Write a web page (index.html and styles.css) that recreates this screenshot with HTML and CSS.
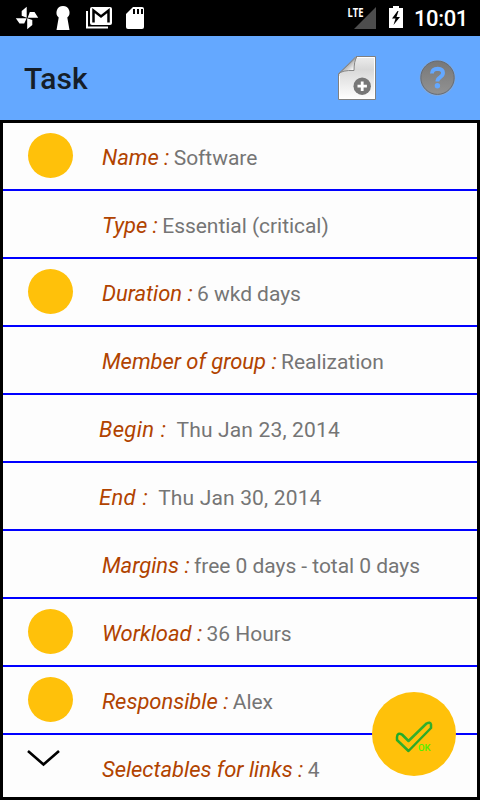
FILE: index.html
```html
<!DOCTYPE html>
<html lang="en">
<head>
<meta charset="utf-8">
<title>Task</title>
<link rel="stylesheet" href="styles.css">
</head>
<body>
<div class="screen">
  <div class="status">
    <svg class="status-icons" width="160" height="36" viewBox="0 0 160 36" fill="#fff">
      <path d="M21.700 11L26.700 6.800V17.700L21.700 15.800ZM27.700 17.700L29.800 12H34.500L38.200 17.700ZM27.200 18.200L32.300 20V25L27.200 29.200ZM26.700 18.200L24.200 23.500H19.500L15.800 18.200Z"/>
      <path d="M63 6a6.500 6.500 0 0 1 4.300 11.400L69.500 30h-13l2.200-12.600A6.500 6.500 0 0 1 63 6z"/>
      <path d="M87 11v16.500h21" fill="none" stroke="#fff" stroke-width="2"/>
      <rect x="90" y="7" width="22" height="18" rx="2"/>
      <path d="M93.500 22.500V10.500l7.500 6 7.500-6v12" fill="none" stroke="#000" stroke-width="2.500"/>
      <path d="M133 7h9a2 2 0 0 1 2 2v18a2 2 0 0 1-2 2h-14a2 2 0 0 1-2-2V14z"/>
      <path d="M134 9v5M138 9v5M142 9v5" stroke="#000" stroke-width="2"/>
    </svg>
    <div class="status-right">
      <span class="lte">LTE</span>
      <svg width="22" height="22" viewBox="0 0 22 22"><path d="M22 0v22H0z" fill="#4d4d4d"/></svg>
      <svg class="battery" width="14" height="22" viewBox="0 0 14 22"><path d="M4 0h6v2h4v20H0V2h4z" fill="#fff"/><path d="M8.500 5L3 12.500h3.500L4.500 19 11 11H7.500L9.500 5z" fill="#000"/></svg>
      <span class="clock">10:01</span>
    </div>
  </div>
  <header class="bar">
    <h1>Task</h1>
    <svg class="new" width="38" height="44" viewBox="0 0 38 44">
      <defs>
        <linearGradient id="page" x2="0" y2="1"><stop offset="0" stop-color="#ededed"/><stop offset=".3" stop-color="#d8d8d8"/><stop offset="1" stop-color="#fff"/></linearGradient>
        <linearGradient id="fold" x2="1" y2="1"><stop offset=".4" stop-color="#999"/><stop offset=".75" stop-color="#f6f6f6"/></linearGradient>
        <linearGradient id="disc" x2="0" y2="1"><stop offset="0" stop-color="#777"/><stop offset="1" stop-color="#929292"/></linearGradient>
      </defs>
      <path d="M.5 43.500V18L18 .5h19.500v43z" fill="url(#page)" stroke="#808080"/>
      <path d="M1.500 42.500V20M18 1.500h18.500v41h-35" fill="none" stroke="#fff"/>
      <path d="M.5 18Q4 14 16 14.500Q16 5 19 .5z" fill="url(#fold)" stroke="#858585"/>
      <circle cx="24.200" cy="30.200" r="8.700" fill="#777"/>
      <path d="M24.200 25.500v9.400M19.500 30.200h9.400" stroke="#fff" stroke-width="2.800"/>
    </svg>
    <svg class="help" width="38" height="38" viewBox="0 0 38 38">
      <circle cx="18.500" cy="19" r="17.900" fill="#9aaac0" opacity=".6"/>
      <circle cx="18.500" cy="18.700" r="16.700" fill="url(#disc)" stroke="#656b74"/>
      <path d="M12.900 14.500Q13.200 9.800 18.700 9.800Q24 10 24 14Q24 16.300 21 18.300Q18.400 19.900 18.400 22.600" fill="none" stroke="#64a8ff" stroke-width="3.900"/>
      <circle cx="18.400" cy="26.800" r="2.700" fill="#64a8ff"/>
    </svg>
  </header>
  <main class="list">
    <div class="row"><i class="dot"></i><p><em>Name : </em><span>Software</span></p></div>
    <div class="row"><p><em>Type : </em><span>Essential (critical)</span></p></div>
    <div class="row"><i class="dot"></i><p><em>Duration : </em><span>6 wkd days</span></p></div>
    <div class="row"><p><em>Member of group : </em><span>Realization</span></p></div>
    <div class="row date"><p><em>Begin :</em><span>Thu Jan 23, 2014</span></p></div>
    <div class="row date"><p><em>End :</em><span>Thu Jan 30, 2014</span></p></div>
    <div class="row"><p><em>Margins : </em><span>free 0 days - total 0 days</span></p></div>
    <div class="row"><i class="dot"></i><p><em>Workload : </em><span>36 Hours</span></p></div>
    <div class="row"><i class="dot"></i><p><em>Responsible : </em><span>Alex</span></p></div>
    <div class="row last">
      <svg class="chevron" width="34" height="18" viewBox="0 0 34 18"><path d="M1 2L16.500 15.500L32 2" fill="none" stroke="#000" stroke-width="2.600"/></svg>
      <p><em>Selectables for links : </em><span>4</span></p>
    </div>
  </main>
  <div class="fab">
    <svg width="38" height="34" viewBox="0 0 38 34">
      <defs><linearGradient id="tick" x2="1" y2="1"><stop offset="0" stop-color="#08a725"/><stop offset=".5" stop-color="#35b02c"/><stop offset="1" stop-color="#109a1d"/></linearGradient></defs>
      <path d="M2 16Q2.500 11 7 13.500L13.500 20L31.500 2.500Q35.500 .5 36 3.500V7L13.500 30L2 19Z" fill="none" stroke="url(#tick)" stroke-width="2.500" stroke-linejoin="round"/>
    </svg>
    <span>OK</span>
  </div>
</div>
</body>
</html>
```
FILE: styles.css
```css
* { box-sizing: border-box; }
body { margin: 0; font-family: Roboto, sans-serif; }
.screen { position: relative; width: 480px; height: 800px; overflow: hidden; display: flex; flex-direction: column; }
.status { height: 36px; background: #000; color: #fff; display: flex; justify-content: space-between; }
.status-right { display: flex; padding: 7px 12px 0 0; align-items: flex-start; }
.lte { font: 700 12px/12px "Open Sans", sans-serif; transform: scaleX(.78); transform-origin: right; margin-right: -10px; }
.battery { margin: -1px 11px 0 13px; }
.clock { font-size: 22px; line-height: 24px; font-weight: 500; letter-spacing: -.35px; }
.bar { height: 84px; background: #64a8ff; display: flex; align-items: center; padding: 0 23px 0 24px; }
h1 { margin: 2px auto 0 0; font-size: 30px; line-height: 36px; font-weight: 500; color: #151e29; }
.new { margin-right: 43px; }
.list { flex: 1; border: 3px solid #000; background: #fdfdfd; overflow: hidden; }
.row { height: 68px; border-bottom: 2px solid #00f; display: flex; padding-left: 25px; }
.dot { width: 45px; height: 45px; border-radius: 50%; background: #ffc10a; margin-top: 10px; margin-right: -45px; }
.row p { margin: 21px 0 0 74px; font-size: 22px; line-height: 28px; color: #757575; white-space: pre; }
em { color: #b14300; letter-spacing: -.03px; }
.row span { font-size: 21px; letter-spacing: -.04px; margin-left: -1px; }
.date p { margin-left: 71px; }
.row.date em { letter-spacing: .35px; word-spacing: .8px; }
.row.date span { margin-left: 10px; letter-spacing: .16px; }
.last { border: 0; }
.chevron { margin: 14px -33px 0 -1px; }
.fab { position: absolute; left: 372px; top: 692px; width: 84px; height: 84px; border-radius: 50%; background: #ffc10a; }
.fab svg { position: absolute; left: 23px; top: 29px; }
.fab span { position: absolute; left: 46px; top: 50px; font-size: 9.500px; line-height: 11px; font-weight: 500; color: #50f000; }
```
